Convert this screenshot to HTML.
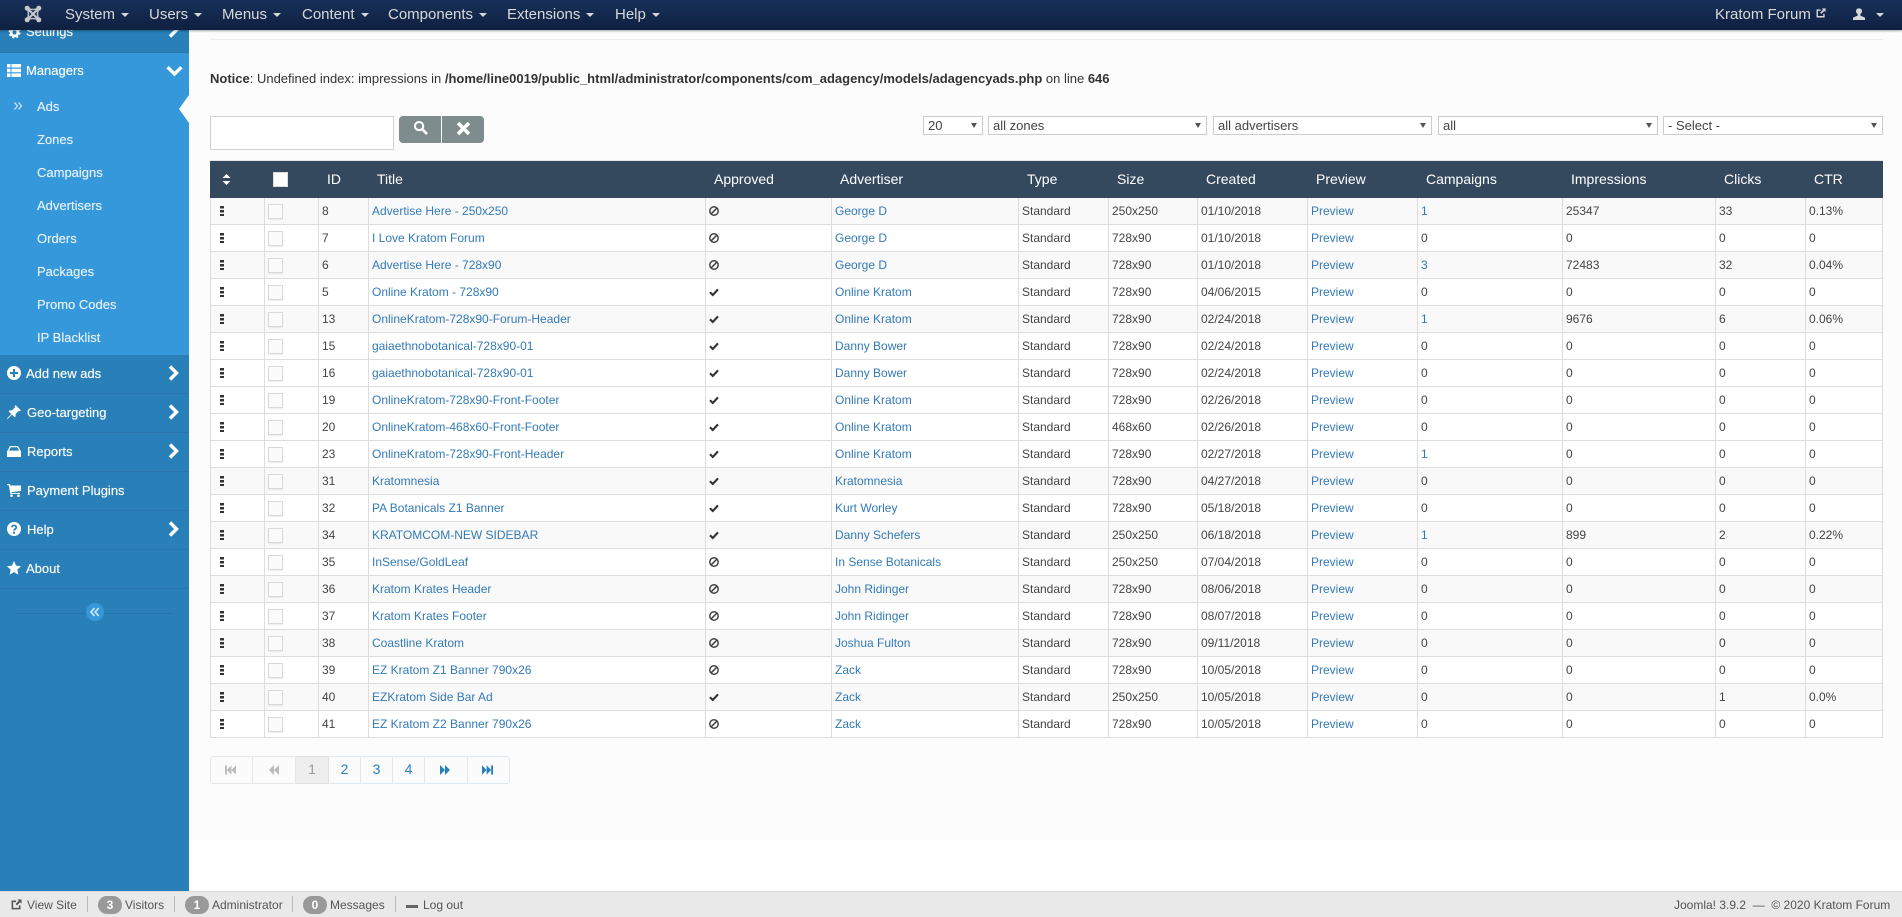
<!DOCTYPE html>
<html><head><meta charset="utf-8"><title>Ads</title>
<style>
*{box-sizing:border-box}
html,body{margin:0;padding:0;width:1902px;height:917px;overflow:hidden;background:#fff;font-family:"Liberation Sans",Arial,sans-serif;font-size:12px;color:#333}
.abs,.nav,.sb,.sb div,.ft span{position:absolute}
a{color:#337ab7;text-decoration:none}
#content{position:absolute;left:189px;top:30px;width:1713px;height:810px;background:#fcfcfc}
#top{position:absolute;left:0;top:0;width:1902px;height:30px;background:linear-gradient(#17305a,#0f2040);box-shadow:0 1px 2px rgba(0,0,0,.35);z-index:5;color:#d8d8d8;font-size:15px}
.nav{top:0;line-height:29px;white-space:nowrap}
.car{display:inline-block;width:0;height:0;border:4px solid transparent;border-top-color:#d8d8d8;border-bottom:0;margin-left:6px;vertical-align:2px}
#side{position:absolute;left:0;top:0;width:189px;height:891px;background:#2980b9;color:#fff;font-size:13px;text-shadow:0 0 .6px rgba(255,255,255,.7)}
.sb{white-space:nowrap;line-height:16px;margin-top:1px}
.li{position:absolute;left:0;width:189px;height:39px;border-bottom:1px solid #2876ab}
.sub{position:absolute;left:37px;line-height:16px;color:#e6f1fa;white-space:nowrap;margin-top:1px}
.ic{position:absolute;overflow:visible}
table{position:absolute;left:210px;top:160px;border-collapse:separate;border-spacing:0;table-layout:fixed;width:1673px;border-top:1px solid #e6e6e6}
th{background:#34495e;color:#fff;font-weight:normal;font-size:14px;height:37px;text-align:left;padding:0 0 1px 8px}
td{height:27px;padding:0 3px;border-right:1px solid #ddd;border-bottom:1px solid #ddd;white-space:nowrap;overflow:hidden;background:#fff;font-size:12px;color:#444}
td svg{display:block}
td:first-child{border-left:1px solid #ddd;padding:0 0 0 9px}
tr.o td{background:#f9f9f9}
.dr{display:block;width:4px;height:10px;background:repeating-linear-gradient(#333 0,#333 2.5px,transparent 2.5px,transparent 4px)}
.cb{display:block;width:15px;height:15px;border:1px solid #d9d9d9;background:#fbfbfb;box-shadow:0 1px 1px rgba(0,0,0,.08);margin:0 0 0 3px}
td.c2{padding:0}
.sel{position:absolute;top:116px;height:19px;background:#fff;border:1px solid #ccc;line-height:17px;padding-left:4px;font-size:13px;color:#444}
.sel:after{content:"";position:absolute;right:5px;top:6px;border:3.5px solid transparent;border-top:5px solid #555;border-bottom:0}
.pg{position:absolute;top:756px;height:28px;border:1px solid #dfe8ee;border-left:0;background:#fbfbfb;text-align:center;line-height:25px;font-size:14px;color:#2980b9}
.ft{color:#555;line-height:16px;white-space:nowrap}
.bd{background:#999;color:#fff;border-radius:10px;height:18px;width:24px;text-align:center;line-height:18px;font-weight:bold;top:896px}
.fs{top:896px;width:1px;height:16px;background:#bbb}
</style></head><body>
<svg width="0" height="0" style="position:absolute"><defs>
<symbol id="ban" viewBox="0 0 10 10"><circle cx="5" cy="5" r="4.2" fill="none" stroke="#444" stroke-width="1.5"/><path d="M2.2 7.8L7.8 2.2" stroke="#444" stroke-width="1.5"/></symbol>
<symbol id="chk" viewBox="0 0 10 10"><path d="M1 5.2L3.8 8L9 2.4" fill="none" stroke="#333" stroke-width="2.1"/></symbol>
<symbol id="r" viewBox="0 0 11 16"><path d="M2 1.5L8.5 8L2 14.5" fill="none" stroke="#fff" stroke-width="3.4"/></symbol>
<symbol id="first" viewBox="0 0 12 10"><path d="M0 0H2V10H0ZM2 5L7 0V10ZM7 5L12 0V10Z"/></symbol>
<symbol id="prev" viewBox="0 0 10 10"><path d="M0 5L5 0V10ZM5 5L10 0V10Z"/></symbol>
<symbol id="next" viewBox="0 0 10 10"><path d="M0 0L5 5L0 10ZM5 0L10 5L5 10Z"/></symbol>
<symbol id="last" viewBox="0 0 12 10"><path d="M0 0L5 5L0 10ZM5 0L10 5L5 10ZM10 0H12V10H10Z"/></symbol>
<symbol id="ext" viewBox="0 0 12 12"><path d="M5.5 2.5H1.5V10.5H9.5V7" fill="none" stroke="currentColor" stroke-width="1.7"/><path d="M7 .5H11.5V5L10 3.5L6.5 7L5 5.5L8.5 2Z" fill="currentColor"/></symbol>
</defs></svg>

<div id="side">
 <div class="li" style="top:14px;background:#2980b9;border-bottom:1px solid #2a78ad"></div>
 <svg class="ic" style="left:8px;top:26px" width="13" height="13" viewBox="0 0 13 13"><circle cx="6.5" cy="6.5" r="3.4" fill="none" stroke="#fff" stroke-width="2.6"/><circle cx="6.5" cy="6.5" r="5" fill="none" stroke="#fff" stroke-width="2" stroke-dasharray="2 2"/></svg>
 <div class="sb" style="left:26px;top:23px">Settings</div>
 <svg class="ic" style="left:168px;top:22px" width="11" height="16"><use href="#r"/></svg>
 <div class="abs" style="left:0;top:53px;width:189px;height:302px;background:#3498db"></div>
 <svg class="ic" style="left:7px;top:64px" width="14" height="13" viewBox="0 0 14 13"><path fill="#fff" d="M0 0H3.5V3.5H0ZM4.5 0H14V3.5H4.5ZM0 4.7H3.5V8.2H0ZM4.5 4.7H14V8.2H4.5ZM0 9.4H3.5V13H0ZM4.5 9.4H14V13H4.5Z"/></svg>
 <div class="sb" style="left:26px;top:62px">Managers</div>
 <svg class="ic" style="left:166px;top:65px" width="17" height="12" viewBox="0 0 17 12"><path d="M1.6 2.2L8.5 9L15.4 2.2" fill="none" stroke="#fff" stroke-width="3.4"/></svg>
 <svg class="ic" style="left:14px;top:102px" width="9" height="8" viewBox="0 0 9 8"><path d="M.5 .5L3.5 4L.5 7.5M4.5 .5L7.5 4L4.5 7.5" fill="none" stroke="#cfe3f3" stroke-width="1.3"/></svg>
 <div class="sub" style="top:98px">Ads</div>
 <div class="sub" style="top:131px">Zones</div>
 <div class="sub" style="top:164px">Campaigns</div>
 <div class="sub" style="top:197px">Advertisers</div>
 <div class="sub" style="top:230px">Orders</div>
 <div class="sub" style="top:263px">Packages</div>
 <div class="sub" style="top:296px">Promo Codes</div>
 <div class="sub" style="top:329px">IP Blacklist</div>
 <svg class="ic" style="left:179px;top:95px" width="10" height="28" viewBox="0 0 10 28"><path d="M10 0L0 14L10 28Z" fill="#fcfcfc"/></svg>

 <div class="li" style="top:355px"></div>
 <svg class="ic" style="left:7px;top:366px" width="14" height="14" viewBox="0 0 14 14"><circle cx="7" cy="7" r="7" fill="#fff"/><path d="M3 7H11M7 3V11" stroke="#2980b9" stroke-width="2"/></svg>
 <div class="sb" style="left:26px;top:365px">Add new ads</div>
 <svg class="ic" style="left:168px;top:365px" width="11" height="16"><use href="#r"/></svg>

 <div class="li" style="top:394px"></div>
 <svg class="ic" style="left:7px;top:405px" width="14" height="14" viewBox="0 0 14 14"><path fill="#fff" d="M8.5 0L14 5.5L12.5 6.2L11.6 6L8.6 9L8.6 11.6L7.4 12.2L5 9.6L.6 14L0 13.4L4.4 9L1.8 6.6L2.4 5.4L5 5.4L8 2.4L7.8 1.5Z"/></svg>
 <div class="sb" style="left:27px;top:404px">Geo-targeting</div>
 <svg class="ic" style="left:168px;top:404px" width="11" height="16"><use href="#r"/></svg>

 <div class="li" style="top:433px"></div>
 <svg class="ic" style="left:7px;top:446px" width="14" height="11" viewBox="0 0 14 11"><path fill="#fff" d="M3 0H11L14 5.5V11H0V5.5ZM3.6 1.2L2 4.6H12L10.4 1.2Z"/></svg>
 <div class="sb" style="left:27px;top:443px">Reports</div>
 <svg class="ic" style="left:168px;top:443px" width="11" height="16"><use href="#r"/></svg>

 <div class="li" style="top:472px"></div>
 <svg class="ic" style="left:7px;top:484px" width="14" height="13" viewBox="0 0 14 13"><path fill="#fff" d="M0 0H3L3.4 1.5H14V7L4.4 8.2L4.6 9H13V10H3.4L1.8 1.2H0Z"/><circle cx="4.5" cy="11.7" r="1.3" fill="#fff"/><circle cx="11.5" cy="11.7" r="1.3" fill="#fff"/></svg>
 <div class="sb" style="left:27px;top:482px">Payment Plugins</div>

 <div class="li" style="top:511px"></div>
 <svg class="ic" style="left:7px;top:522px" width="14" height="14" viewBox="0 0 14 14"><circle cx="7" cy="7" r="7" fill="#fff"/><path d="M4.8 5.4C4.8 2.8 9.3 2.8 9.3 5.3C9.3 7 7 7 7 8.6" fill="none" stroke="#2980b9" stroke-width="1.7"/><rect x="6" y="9.7" width="2" height="2" fill="#2980b9"/></svg>
 <div class="sb" style="left:27px;top:521px">Help</div>
 <svg class="ic" style="left:168px;top:521px" width="11" height="16"><use href="#r"/></svg>

 <div class="li" style="top:550px"></div>
 <svg class="ic" style="left:7px;top:561px" width="14" height="14" viewBox="0 0 14 14"><path fill="#fff" d="M7 0L9.1 4.6L14 5.2L10.4 8.6L11.3 13.6L7 11.1L2.7 13.6L3.6 8.6L0 5.2L4.9 4.6Z"/></svg>
 <div class="sb" style="left:26px;top:560px">About</div>

 <div class="abs" style="left:15px;top:613px;width:159px;height:1px;background:#2673a8"></div>
 <div class="abs" style="left:86px;top:603px;width:18px;height:18px;border-radius:50%;background:#3498db"></div>
 <svg class="ic" style="left:90px;top:607px" width="10" height="10" viewBox="0 0 10 10"><path d="M4.5 1L1 5L4.5 9M8.7 1L5.2 5L8.7 9" fill="none" stroke="#d5e8f6" stroke-width="1.7"/></svg>
</div>

<div id="content"></div>
<div class="abs" style="left:210px;top:39px;width:1673px;height:1px;background:#eee"></div>
<div class="abs" style="left:210px;top:71px;line-height:16px;white-space:nowrap;font-size:13px"><b>Notice</b>: Undefined index: impressions in <b>/home/line0019/public_html/administrator/components/com_adagency/models/adagencyads.php</b> on line <b>646</b></div>

<div class="abs" style="left:210px;top:116px;width:184px;height:34px;background:#fff;border:1px solid #d2d2d2"></div>
<div class="abs" style="left:399px;top:116px;width:42px;height:27px;background:#7f8c8d;border-radius:4px 0 0 4px"></div>
<div class="abs" style="left:442px;top:116px;width:42px;height:27px;background:#7f8c8d;border-radius:0 4px 4px 0"></div>
<svg class="ic" style="left:413px;top:120px" width="15" height="15" viewBox="0 0 16 16"><circle cx="6.5" cy="6.5" r="4.4" fill="none" stroke="#fff" stroke-width="2.2"/><path d="M9.8 9.8L15 15" stroke="#fff" stroke-width="2.8"/></svg>
<svg class="ic" style="left:456px;top:121px" width="15" height="15" viewBox="0 0 15 15"><path d="M2 2L13 13M13 2L2 13" stroke="#fff" stroke-width="3.6"/></svg>

<div class="sel" style="left:923px;width:60px">20</div>
<div class="sel" style="left:988px;width:219px">all zones</div>
<div class="sel" style="left:1213px;width:219px">all advertisers</div>
<div class="sel" style="left:1438px;width:220px">all</div>
<div class="sel" style="left:1663px;width:220px">- Select -</div>

<table>
<colgroup><col style="width:55px"><col style="width:54px"><col style="width:50px"><col style="width:337px"><col style="width:126px"><col style="width:187px"><col style="width:90px"><col style="width:89px"><col style="width:110px"><col style="width:110px"><col style="width:145px"><col style="width:153px"><col style="width:90px"><col style="width:77px"></colgroup>
<thead><tr><th style="padding:0 0 0 12px"><svg width="9" height="11" viewBox="0 0 9 11" style="display:block"><path fill="#fff" d="M4.5 0L8.5 4H.5ZM4.5 11L.5 7H8.5Z"/></svg></th><th style="padding:0 0 0 8px"><span style="display:block;width:15px;height:15px;background:#fff;border:1px solid #ddd"></span></th><th>ID</th><th>Title</th><th>Approved</th><th>Advertiser</th><th>Type</th><th>Size</th><th>Created</th><th>Preview</th><th>Campaigns</th><th>Impressions</th><th>Clicks</th><th>CTR</th></tr></thead>
<tbody>
<tr class="o"><td><i class="dr"></i></td><td class="c2"><i class="cb"></i></td><td>8</td><td><a>Advertise Here - 250x250</a></td><td><svg width="10" height="10"><use href="#ban"/></svg></td><td><a>George D</a></td><td>Standard</td><td>250x250</td><td>01/10/2018</td><td><a>Preview</a></td><td><a>1</a></td><td>25347</td><td>33</td><td>0.13%</td></tr>
<tr><td><i class="dr"></i></td><td class="c2"><i class="cb"></i></td><td>7</td><td><a>I Love Kratom Forum</a></td><td><svg width="10" height="10"><use href="#ban"/></svg></td><td><a>George D</a></td><td>Standard</td><td>728x90</td><td>01/10/2018</td><td><a>Preview</a></td><td>0</td><td>0</td><td>0</td><td>0</td></tr>
<tr class="o"><td><i class="dr"></i></td><td class="c2"><i class="cb"></i></td><td>6</td><td><a>Advertise Here - 728x90</a></td><td><svg width="10" height="10"><use href="#ban"/></svg></td><td><a>George D</a></td><td>Standard</td><td>728x90</td><td>01/10/2018</td><td><a>Preview</a></td><td><a>3</a></td><td>72483</td><td>32</td><td>0.04%</td></tr>
<tr><td><i class="dr"></i></td><td class="c2"><i class="cb"></i></td><td>5</td><td><a>Online Kratom - 728x90</a></td><td><svg width="10" height="10"><use href="#chk"/></svg></td><td><a>Online Kratom</a></td><td>Standard</td><td>728x90</td><td>04/06/2015</td><td><a>Preview</a></td><td>0</td><td>0</td><td>0</td><td>0</td></tr>
<tr class="o"><td><i class="dr"></i></td><td class="c2"><i class="cb"></i></td><td>13</td><td><a>OnlineKratom-728x90-Forum-Header</a></td><td><svg width="10" height="10"><use href="#chk"/></svg></td><td><a>Online Kratom</a></td><td>Standard</td><td>728x90</td><td>02/24/2018</td><td><a>Preview</a></td><td><a>1</a></td><td>9676</td><td>6</td><td>0.06%</td></tr>
<tr><td><i class="dr"></i></td><td class="c2"><i class="cb"></i></td><td>15</td><td><a>gaiaethnobotanical-728x90-01</a></td><td><svg width="10" height="10"><use href="#chk"/></svg></td><td><a>Danny Bower</a></td><td>Standard</td><td>728x90</td><td>02/24/2018</td><td><a>Preview</a></td><td>0</td><td>0</td><td>0</td><td>0</td></tr>
<tr><td><i class="dr"></i></td><td class="c2"><i class="cb"></i></td><td>16</td><td><a>gaiaethnobotanical-728x90-01</a></td><td><svg width="10" height="10"><use href="#chk"/></svg></td><td><a>Danny Bower</a></td><td>Standard</td><td>728x90</td><td>02/24/2018</td><td><a>Preview</a></td><td>0</td><td>0</td><td>0</td><td>0</td></tr>
<tr><td><i class="dr"></i></td><td class="c2"><i class="cb"></i></td><td>19</td><td><a>OnlineKratom-728x90-Front-Footer</a></td><td><svg width="10" height="10"><use href="#chk"/></svg></td><td><a>Online Kratom</a></td><td>Standard</td><td>728x90</td><td>02/26/2018</td><td><a>Preview</a></td><td>0</td><td>0</td><td>0</td><td>0</td></tr>
<tr><td><i class="dr"></i></td><td class="c2"><i class="cb"></i></td><td>20</td><td><a>OnlineKratom-468x60-Front-Footer</a></td><td><svg width="10" height="10"><use href="#chk"/></svg></td><td><a>Online Kratom</a></td><td>Standard</td><td>468x60</td><td>02/26/2018</td><td><a>Preview</a></td><td>0</td><td>0</td><td>0</td><td>0</td></tr>
<tr><td><i class="dr"></i></td><td class="c2"><i class="cb"></i></td><td>23</td><td><a>OnlineKratom-728x90-Front-Header</a></td><td><svg width="10" height="10"><use href="#chk"/></svg></td><td><a>Online Kratom</a></td><td>Standard</td><td>728x90</td><td>02/27/2018</td><td><a>Preview</a></td><td><a>1</a></td><td>0</td><td>0</td><td>0</td></tr>
<tr class="o"><td><i class="dr"></i></td><td class="c2"><i class="cb"></i></td><td>31</td><td><a>Kratomnesia</a></td><td><svg width="10" height="10"><use href="#chk"/></svg></td><td><a>Kratomnesia</a></td><td>Standard</td><td>728x90</td><td>04/27/2018</td><td><a>Preview</a></td><td>0</td><td>0</td><td>0</td><td>0</td></tr>
<tr><td><i class="dr"></i></td><td class="c2"><i class="cb"></i></td><td>32</td><td><a>PA Botanicals Z1 Banner</a></td><td><svg width="10" height="10"><use href="#chk"/></svg></td><td><a>Kurt Worley</a></td><td>Standard</td><td>728x90</td><td>05/18/2018</td><td><a>Preview</a></td><td>0</td><td>0</td><td>0</td><td>0</td></tr>
<tr class="o"><td><i class="dr"></i></td><td class="c2"><i class="cb"></i></td><td>34</td><td><a>KRATOMCOM-NEW SIDEBAR</a></td><td><svg width="10" height="10"><use href="#chk"/></svg></td><td><a>Danny Schefers</a></td><td>Standard</td><td>250x250</td><td>06/18/2018</td><td><a>Preview</a></td><td><a>1</a></td><td>899</td><td>2</td><td>0.22%</td></tr>
<tr><td><i class="dr"></i></td><td class="c2"><i class="cb"></i></td><td>35</td><td><a>InSense/GoldLeaf</a></td><td><svg width="10" height="10"><use href="#ban"/></svg></td><td><a>In Sense Botanicals</a></td><td>Standard</td><td>250x250</td><td>07/04/2018</td><td><a>Preview</a></td><td>0</td><td>0</td><td>0</td><td>0</td></tr>
<tr class="o"><td><i class="dr"></i></td><td class="c2"><i class="cb"></i></td><td>36</td><td><a>Kratom Krates Header</a></td><td><svg width="10" height="10"><use href="#ban"/></svg></td><td><a>John Ridinger</a></td><td>Standard</td><td>728x90</td><td>08/06/2018</td><td><a>Preview</a></td><td>0</td><td>0</td><td>0</td><td>0</td></tr>
<tr><td><i class="dr"></i></td><td class="c2"><i class="cb"></i></td><td>37</td><td><a>Kratom Krates Footer</a></td><td><svg width="10" height="10"><use href="#ban"/></svg></td><td><a>John Ridinger</a></td><td>Standard</td><td>728x90</td><td>08/07/2018</td><td><a>Preview</a></td><td>0</td><td>0</td><td>0</td><td>0</td></tr>
<tr class="o"><td><i class="dr"></i></td><td class="c2"><i class="cb"></i></td><td>38</td><td><a>Coastline Kratom</a></td><td><svg width="10" height="10"><use href="#ban"/></svg></td><td><a>Joshua Fulton</a></td><td>Standard</td><td>728x90</td><td>09/11/2018</td><td><a>Preview</a></td><td>0</td><td>0</td><td>0</td><td>0</td></tr>
<tr><td><i class="dr"></i></td><td class="c2"><i class="cb"></i></td><td>39</td><td><a>EZ Kratom Z1 Banner 790x26</a></td><td><svg width="10" height="10"><use href="#ban"/></svg></td><td><a>Zack</a></td><td>Standard</td><td>728x90</td><td>10/05/2018</td><td><a>Preview</a></td><td>0</td><td>0</td><td>0</td><td>0</td></tr>
<tr class="o"><td><i class="dr"></i></td><td class="c2"><i class="cb"></i></td><td>40</td><td><a>EZKratom Side Bar Ad</a></td><td><svg width="10" height="10"><use href="#chk"/></svg></td><td><a>Zack</a></td><td>Standard</td><td>250x250</td><td>10/05/2018</td><td><a>Preview</a></td><td>0</td><td>0</td><td>1</td><td>0.0%</td></tr>
<tr><td><i class="dr"></i></td><td class="c2"><i class="cb"></i></td><td>41</td><td><a>EZ Kratom Z2 Banner 790x26</a></td><td><svg width="10" height="10"><use href="#ban"/></svg></td><td><a>Zack</a></td><td>Standard</td><td>728x90</td><td>10/05/2018</td><td><a>Preview</a></td><td>0</td><td>0</td><td>0</td><td>0</td></tr>
</tbody></table>

<div class="pg" style="left:210px;width:43px;border-left:1px solid #e6e6e6;border-color:#e6e6e6;border-radius:3px 0 0 3px"></div>
<div class="pg" style="left:253px;width:43px;border-color:#e6e6e6"></div>
<div class="pg" style="left:296px;width:33px;background:#eee;color:#999;border-color:#e0e0e0">1</div>
<div class="pg" style="left:329px;width:32px">2</div>
<div class="pg" style="left:361px;width:32px">3</div>
<div class="pg" style="left:393px;width:32px">4</div>
<div class="pg" style="left:425px;width:43px"></div>
<div class="pg" style="left:468px;width:42px;border-radius:0 3px 3px 0"></div>
<svg class="ic" style="left:225px;top:765px;color:#bbb" fill="currentColor" width="11" height="10"><use href="#first"/></svg>
<svg class="ic" style="left:269px;top:765px;color:#bbb" fill="currentColor" width="10" height="10"><use href="#prev"/></svg>
<svg class="ic" style="left:440px;top:765px;color:#2980b9" fill="currentColor" width="10" height="10"><use href="#next"/></svg>
<svg class="ic" style="left:482px;top:765px;color:#2980b9" fill="currentColor" width="11" height="10"><use href="#last"/></svg>

<div id="top">
 <svg class="ic" style="left:24px;top:5px" width="18" height="18" viewBox="0 0 18 18"><path d="M3 3Q9 6 15 3Q12 9 15 15Q9 12 3 15Q6 9 3 3Z" fill="none" stroke="#b9bcc0" stroke-width="1.6"/><path d="M4 4L14 14M14 4L4 14" stroke="#c6c8ca" stroke-width="2.2"/><g fill="#c6c8ca"><circle cx="3.2" cy="3.2" r="2.5"/><circle cx="14.8" cy="3.2" r="2.5"/><circle cx="3.2" cy="14.8" r="2.5"/><circle cx="14.8" cy="14.8" r="2.5"/></g></svg>
 <div class="nav" style="left:65px">System<i class="car"></i></div>
 <div class="nav" style="left:149px">Users<i class="car"></i></div>
 <div class="nav" style="left:222px">Menus<i class="car"></i></div>
 <div class="nav" style="left:302px">Content<i class="car"></i></div>
 <div class="nav" style="left:388px">Components<i class="car"></i></div>
 <div class="nav" style="left:507px">Extensions<i class="car"></i></div>
 <div class="nav" style="left:615px">Help<i class="car"></i></div>
 <div class="nav" style="left:1715px">Kratom Forum</div>
 <svg class="ic" style="left:1816px;top:8px;color:#d8d8d8" width="10" height="10"><use href="#ext"/></svg>
 <svg class="ic" style="left:1853px;top:8px" width="12" height="12" viewBox="0 0 12 12"><circle cx="6" cy="3.2" r="3" fill="#d8d8d8"/><path d="M4.6 5.5H7.4V7.6L12 9.6V12H0V9.6L4.6 7.6Z" fill="#d8d8d8"/></svg>
 <i class="car abs" style="left:1876px;top:13px;margin:0"></i>
</div>

<div class="abs" style="left:0;top:891px;width:1902px;height:26px;background:#e9e9e9;border-top:1px solid #dcdcdc"></div>
<div class="ft">
 <svg class="ic" style="left:11px;top:899px;color:#555" width="11" height="11"><use href="#ext"/></svg>
 <span style="left:27px;top:897px">View Site</span><span class="fs" style="left:87px"></span>
 <span class="bd" style="left:98px">3</span><span style="left:125px;top:897px">Visitors</span><span class="fs" style="left:174px"></span>
 <span class="bd" style="left:185px">1</span><span style="left:212px;top:897px">Administrator</span><span class="fs" style="left:292px"></span>
 <span class="bd" style="left:303px">0</span><span style="left:330px;top:897px">Messages</span><span class="fs" style="left:395px"></span>
 <span style="left:406px;top:905px;width:12px;height:3px;background:#666"></span><span style="left:423px;top:897px">Log out</span>
 <span style="left:1674px;top:897px">Joomla! 3.9.2 &nbsp;— &nbsp;© 2020 Kratom Forum</span>
</div>
</body></html>
